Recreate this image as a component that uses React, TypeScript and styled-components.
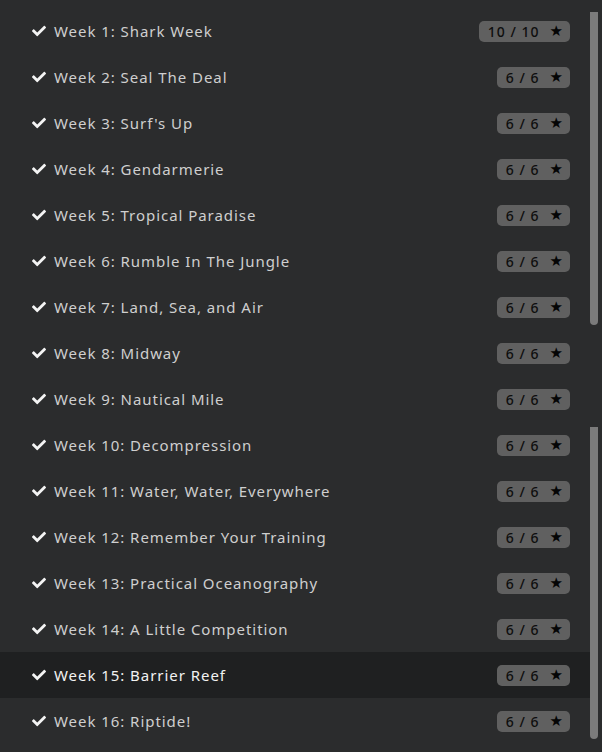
import { createGlobalStyle } from 'styled-components'
import styled from 'styled-components'
import { FaCheck } from 'react-icons/fa'

const Global = createGlobalStyle`
  html, body {
    margin: 0;
    padding: 0;
    background: #2b2c2d;
  }
`

const Panel = styled.div`
  display: flex;
  width: 602px;
  height: 752px;
  box-sizing: border-box;
  padding-top: 8px;
  background: #2b2c2d;
  overflow: hidden;
  font-family: 'Noto Sans', 'Open Sans', sans-serif;
`

const List = styled.div`
  flex: 1;
  display: flex;
  flex-direction: column;
`

const Row = styled.div<{ $active?: boolean }>`
  display: flex;
  align-items: center;
  height: 46px;
  padding: 0 20px 0 32px;
  background: ${(p) => (p.$active ? '#1f2021' : 'transparent')};
  color: ${(p) => (p.$active ? '#f2f2f2' : '#cfcfcf')};
`

const Tick = styled.span`
  display: flex;
  width: 22px;
  color: #f4f4f4;
  font-size: 14px;
`

const Title = styled.span`
  flex: 1;
  font-size: 15px;
  letter-spacing: 0.95px;
`

const Badge = styled.span`
  display: flex;
  align-items: center;
  gap: 10px;
  height: 21px;
  padding: 0 6px 0 9px;
  border-radius: 5px;
  background: #606060;
  color: #0e0e0e;
  font-size: 14px;
  font-weight: 500;
  letter-spacing: 1px;
`

const Star = styled.span`
  font-family: 'DejaVu Sans', sans-serif;
  font-size: 15px;
  color: #050505;
`

const Track = styled.div`
  display: flex;
  flex-direction: column;
  gap: 102px;
  width: 8px;
  margin: 4px 4px 4px 0;
`

const Thumb = styled.div<{ $h: number }>`
  height: ${(p) => p.$h}px;
  background: #7b7b7b;
  border-radius: 0 0 4px 4px;
`

const weeks: [string, number][] = [
  ['Week 1: Shark Week', 10],
  ['Week 2: Seal The Deal', 6],
  ["Week 3: Surf's Up", 6],
  ['Week 4: Gendarmerie', 6],
  ['Week 5: Tropical Paradise', 6],
  ['Week 6: Rumble In The Jungle', 6],
  ['Week 7: Land, Sea, and Air', 6],
  ['Week 8: Midway', 6],
  ['Week 9: Nautical Mile', 6],
  ['Week 10: Decompression', 6],
  ['Week 11: Water, Water, Everywhere', 6],
  ['Week 12: Remember Your Training', 6],
  ['Week 13: Practical Oceanography', 6],
  ['Week 14: A Little Competition', 6],
  ['Week 15: Barrier Reef', 6],
  ['Week 16: Riptide!', 6],
]

const App = () => (
  <>
    <Global />
    <Panel>
      <List>
        {weeks.map(([name, stars], index) => (
          <Row key={index} $active={index === 14}>
            <Tick>
              <FaCheck />
            </Tick>
            <Title>{name}</Title>
            <Badge>
              {`${stars} / ${stars}`}
              <Star>★</Star>
            </Badge>
          </Row>
        ))}
      </List>
      <Track>
        <Thumb $h={313} />
        <Thumb $h={312} />
      </Track>
    </Panel>
  </>
)

export default App
